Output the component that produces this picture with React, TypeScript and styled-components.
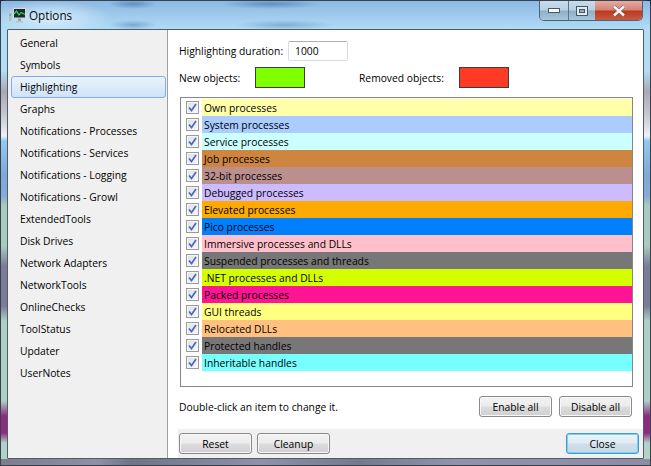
import React from "react";
import styled, { createGlobalStyle } from "styled-components";

const GlobalStyle = createGlobalStyle`
  html, body {
    margin: 0;
    padding: 0;
    width: 651px;
    height: 466px;
    overflow: hidden;
    background: #1f262c;
  }
  * {
    box-sizing: border-box;
  }
`;

const sideBand = `linear-gradient(
  #b3dcf6 0px,
  #b3dcf6 70px,
  #a9a9b6 90px,
  #c9c9d2 115px,
  #eef2f6 135px,
  #93c8ee 140px,
  #7ea8d8 175px,
  #86acd6 195px,
  #a9cbbd 205px,
  #a9cbbd 245px,
  #7b7c98 265px,
  #7b7c98 305px,
  #aecfc4 320px,
  #aecfc4 400px,
  #8c2c7e 415px,
  #8c2c7e 432px,
  #b2d2c8 442px,
  #b2d2c8 466px
)`;

const Frame = styled.div`
  position: relative;
  width: 651px;
  height: 466px;
  display: flex;
  flex-direction: column;
  padding: 0 6px 6px 6px;
  border: 1px solid #37424c;
  border-radius: 6px 6px 0 0;
  background: ${sideBand};
  font-family: "Open Sans", "Noto Sans", sans-serif;
  font-size: 10.3px;
  color: #000000;
`;

const TitleBar = styled.div`
  height: 28px;
  flex: none;
  margin: 0 -6px;
  padding: 0 7px 0 6px;
  display: flex;
  align-items: flex-start;
  justify-content: space-between;
  background:
    radial-gradient(ellipse 60px 18px at 50px 17px, rgba(225, 243, 253, 0.85), rgba(225, 243, 253, 0)),
    radial-gradient(ellipse 24px 5px at 132px 3px, rgba(60, 105, 165, 0.55), rgba(60, 105, 165, 0)),
    radial-gradient(ellipse 24px 5px at 132px 24px, rgba(60, 115, 170, 0.45), rgba(60, 115, 170, 0)),
    radial-gradient(ellipse 50px 5px at 270px 3px, rgba(60, 105, 165, 0.55), rgba(60, 105, 165, 0)),
    radial-gradient(ellipse 50px 5px at 284px 24px, rgba(60, 115, 170, 0.4), rgba(60, 115, 170, 0)),
    linear-gradient(#8db8e2 0%, #a2cdee 60%, #afdcf6 100%);
`;

const TitleGroup = styled.div`
  display: flex;
  align-items: center;
  gap: 3px;
  padding: 6px 0 0 2px;
`;

const TitleText = styled.span`
  font-size: 11.7px;
  line-height: 16px;
  color: #06080f;
`;

const WindowControls = styled.div`
  display: flex;
  height: 20px;
  border: 1px solid #4d6478;
  border-top: 0;
  border-radius: 0 0 5px 5px;
  overflow: hidden;
`;

const ControlButton = styled.div<{ $width: number; $close?: boolean }>`
  width: ${({ $width }) => $width}px;
  display: flex;
  align-items: center;
  justify-content: center;
  border-left: ${({ $close }) => ($close ? "0" : "1px solid #5d7488")};
  background: ${({ $close }) =>
    $close
      ? "linear-gradient(#e4aca2 0%, #d68475 45%, #bb3a22 55%, #c85c40 100%)"
      : "linear-gradient(#c9dcea 0%, #b7d0e2 45%, #8fb0c8 55%, #a9c6da 100%)"};

  &:first-child {
    border-left: 0;
  }
`;

const Client = styled.div`
  flex: 1;
  min-height: 0;
  display: flex;
  background: #ffffff;
  border: 1px solid #4f5c66;
  border-radius: 1px;
`;

const BottomBand = styled.div`
  position: absolute;
  left: 0;
  right: 0;
  bottom: 0;
  height: 6px;
  background: linear-gradient(
    90deg,
    #7d7d8e 0%,
    #8f8fa8 15%,
    #6f7488 20%,
    #9090aa 40%,
    #75798e 55%,
    #9292ac 70%,
    #8c8ca6 100%
  );
`;

const Sidebar = styled.nav`
  width: 160px;
  flex: none;
  display: flex;
  flex-direction: column;
  padding: 2px 1px 0 3px;
  background: #f0f0f0;
  border-right: 1px solid #a0a0a0;
`;

const NavItem = styled.div<{ $selected?: boolean }>`
  height: 22px;
  flex: none;
  display: flex;
  align-items: center;
  padding-left: 8px;
  border: 1px solid ${({ $selected }) => ($selected ? "#84acdd" : "transparent")};
  border-radius: 3px;
  background: ${({ $selected }) =>
    $selected ? "linear-gradient(#eaf3fc, #cfe3f9)" : "transparent"};
`;

const Pane = styled.div`
  flex: 1;
  min-width: 0;
  display: flex;
  flex-direction: column;
`;

const PaneBody = styled.div`
  flex: 1;
  min-height: 0;
  display: flex;
  flex-direction: column;
  padding: 11px 10px 0 11px;
`;

const DurationRow = styled.div`
  display: flex;
  align-items: center;
  height: 20px;
`;

const DurationLabel = styled.span`
  width: 109px;
  flex: none;
`;

const DurationInput = styled.div`
  width: 60px;
  height: 20px;
  display: flex;
  align-items: center;
  padding-left: 6px;
  border: 1px solid #d5dde5;
  border-top-color: #abadb3;
  border-radius: 2px;
`;

const ColorRow = styled.div`
  display: flex;
  align-items: center;
  height: 21px;
  margin-top: 6px;
`;

const ColorLabel = styled.span<{ $width: number }>`
  width: ${({ $width }) => $width}px;
  flex: none;
`;

const ColorSwatch = styled.div<{ $color: string }>`
  width: 50px;
  height: 21px;
  flex: none;
  margin-right: 54px;
  background: ${({ $color }) => $color};
  border: 1px solid #3c3c3c;
`;

const ListBox = styled.div`
  height: 290px;
  flex: none;
  margin: 9px 0 0 1px;
  padding: 1px 0 0 0;
  border: 1px solid #82878c;
  display: flex;
  flex-direction: column;
`;

const ListRow = styled.div`
  height: 17px;
  flex: none;
  display: flex;
  align-items: stretch;
`;

const CheckCell = styled.div`
  width: 21px;
  flex: none;
  display: flex;
  align-items: center;
  justify-content: center;
  padding-left: 2px;
`;

const CheckBox = styled.div`
  width: 13px;
  height: 13px;
  display: flex;
  align-items: center;
  justify-content: center;
  border: 1px solid #9a9b9b;
  background: linear-gradient(135deg, #dde0e6, #f6f7f9);
  box-shadow: inset 0 0 0 1px #f6f6f6;
`;

const RowLabel = styled.div<{ $color: string }>`
  flex: 1;
  display: flex;
  align-items: center;
  padding-left: 2px;
  background: ${({ $color }) => $color};
`;

const ActionRow = styled.div`
  height: 21px;
  display: flex;
  align-items: center;
  gap: 7px;
  margin: 9px 1px 0 0;
`;

const Hint = styled.span`
  flex: 1;
`;

const Button = styled.div<{ $primary?: boolean }>`
  width: 73px;
  height: 21px;
  flex: none;
  display: flex;
  align-items: center;
  justify-content: center;
  border: 1px solid ${({ $primary }) => ($primary ? "#3c9ecf" : "#8a8a8a")};
  border-radius: 3px;
  background: ${({ $primary }) =>
    $primary
      ? "linear-gradient(#ecf5fa 0%, #dfeaf1 48%, #cfdfe9 52%, #c5d8e5 100%)"
      : "linear-gradient(#f3f3f3 0%, #ebebeb 48%, #dddddd 52%, #cfcfcf 100%)"};
  box-shadow: inset 0 0 0 1px
    ${({ $primary }) => ($primary ? "#7fd0f0" : "#f8f8f8")};
`;

const Footer = styled.div`
  height: 29px;
  flex: none;
  display: flex;
  align-items: center;
  gap: 5px;
  padding: 0 4px 0 1px;
  margin-left: 10px;
  background: #f0f0f0;
`;

const FooterSpacer = styled.div`
  flex: 1;
`;

const navItems = [
  "General",
  "Symbols",
  "Highlighting",
  "Graphs",
  "Notifications - Processes",
  "Notifications - Services",
  "Notifications - Logging",
  "Notifications - Growl",
  "ExtendedTools",
  "Disk Drives",
  "Network Adapters",
  "NetworkTools",
  "OnlineChecks",
  "ToolStatus",
  "Updater",
  "UserNotes",
];

const highlightRows = [
  { label: "Own processes", color: "#ffffaa" },
  { label: "System processes", color: "#aaccff" },
  { label: "Service processes", color: "#ccffff" },
  { label: "Job processes", color: "#cd853f" },
  { label: "32-bit processes", color: "#bc8f8f" },
  { label: "Debugged processes", color: "#ccbbff" },
  { label: "Elevated processes", color: "#ffaa00" },
  { label: "Pico processes", color: "#0080ff" },
  { label: "Immersive processes and DLLs", color: "#ffc0cb" },
  { label: "Suspended processes and threads", color: "#777777" },
  { label: ".NET processes and DLLs", color: "#d4ff00" },
  { label: "Packed processes", color: "#ff1493" },
  { label: "GUI threads", color: "#ffff80" },
  { label: "Relocated DLLs", color: "#ffc080" },
  { label: "Protected handles", color: "#777777" },
  { label: "Inheritable handles", color: "#77ffff" },
];

const CheckMark = () => (
  <svg width="9" height="9" viewBox="0 0 9 9">
    <path
      d="M1 4.5 L3.5 7.5 L8 1"
      fill="none"
      stroke="#5068bc"
      strokeWidth="1.7"
    />
  </svg>
);

const AppIcon = () => (
  <svg width="17" height="15" viewBox="0 0 17 15">
    <rect x="0" y="5" width="2.5" height="8" fill="#b4c0b8" />
    <rect x="0.5" y="6" width="1.5" height="2" fill="#58c060" />
    <rect x="4" y="0" width="13" height="10.5" fill="#d4dadd" />
    <rect x="5" y="1" width="11" height="8.5" fill="#1d2a30" />
    <path
      d="M5 6 L7.5 3 L10 7 L12 4.5 L16 6.5"
      fill="none"
      stroke="#3cd24e"
      strokeWidth="1.2"
    />
    <rect x="9" y="10.5" width="3" height="2.5" fill="#98a4aa" />
    <rect x="7" y="13" width="7" height="1.5" fill="#bcc6ca" />
  </svg>
);

const App: React.FC = () => {
  return (
    <>
      <GlobalStyle />
      <Frame>
        <TitleBar>
          <TitleGroup>
            <AppIcon />
            <TitleText>Options</TitleText>
          </TitleGroup>
          <WindowControls>
            <ControlButton $width={28}>
              <svg width="12" height="5" viewBox="0 0 12 5">
                <rect x="0.5" y="0.5" width="11" height="4" fill="#fff" stroke="#44586a" />
              </svg>
            </ControlButton>
            <ControlButton $width={27}>
              <svg width="12" height="10" viewBox="0 0 12 10">
                <rect x="0.5" y="0.5" width="11" height="9" fill="#dfe9f0" stroke="#44586a" />
                <rect x="3.5" y="3.5" width="5" height="3" fill="#8fb0c8" stroke="#44586a" />
              </svg>
            </ControlButton>
            <ControlButton $width={47} $close>
              <svg width="14" height="12" viewBox="0 0 14 12">
                <path
                  d="M2 1.5 L12 10.5 M12 1.5 L2 10.5"
                  stroke="#5a5a5a"
                  strokeWidth="3.6"
                />
                <path
                  d="M2 1.5 L12 10.5 M12 1.5 L2 10.5"
                  stroke="#f4f4f4"
                  strokeWidth="2.4"
                />
              </svg>
            </ControlButton>
          </WindowControls>
        </TitleBar>
        <Client>
          <Sidebar>
            {navItems.map((item) => (
              <NavItem key={item} $selected={item === "Highlighting"}>
                {item}
              </NavItem>
            ))}
          </Sidebar>
          <Pane>
            <PaneBody>
              <DurationRow>
                <DurationLabel>Highlighting duration:</DurationLabel>
                <DurationInput>1000</DurationInput>
              </DurationRow>
              <ColorRow>
                <ColorLabel $width={76}>New objects:</ColorLabel>
                <ColorSwatch $color="#80ff00" />
                <ColorLabel $width={100}>Removed objects:</ColorLabel>
                <ColorSwatch $color="#ff3b26" />
              </ColorRow>
              <ListBox>
                {highlightRows.map((row) => (
                  <ListRow key={row.label}>
                    <CheckCell>
                      <CheckBox>
                        <CheckMark />
                      </CheckBox>
                    </CheckCell>
                    <RowLabel $color={row.color}>{row.label}</RowLabel>
                  </ListRow>
                ))}
              </ListBox>
              <ActionRow>
                <Hint>Double-click an item to change it.</Hint>
                <Button>Enable all</Button>
                <Button>Disable all</Button>
              </ActionRow>
            </PaneBody>
            <Footer>
              <Button>Reset</Button>
              <Button>Cleanup</Button>
              <FooterSpacer />
              <Button $primary>Close</Button>
            </Footer>
          </Pane>
        </Client>
        <BottomBand />
      </Frame>
    </>
  );
};

export default App;
